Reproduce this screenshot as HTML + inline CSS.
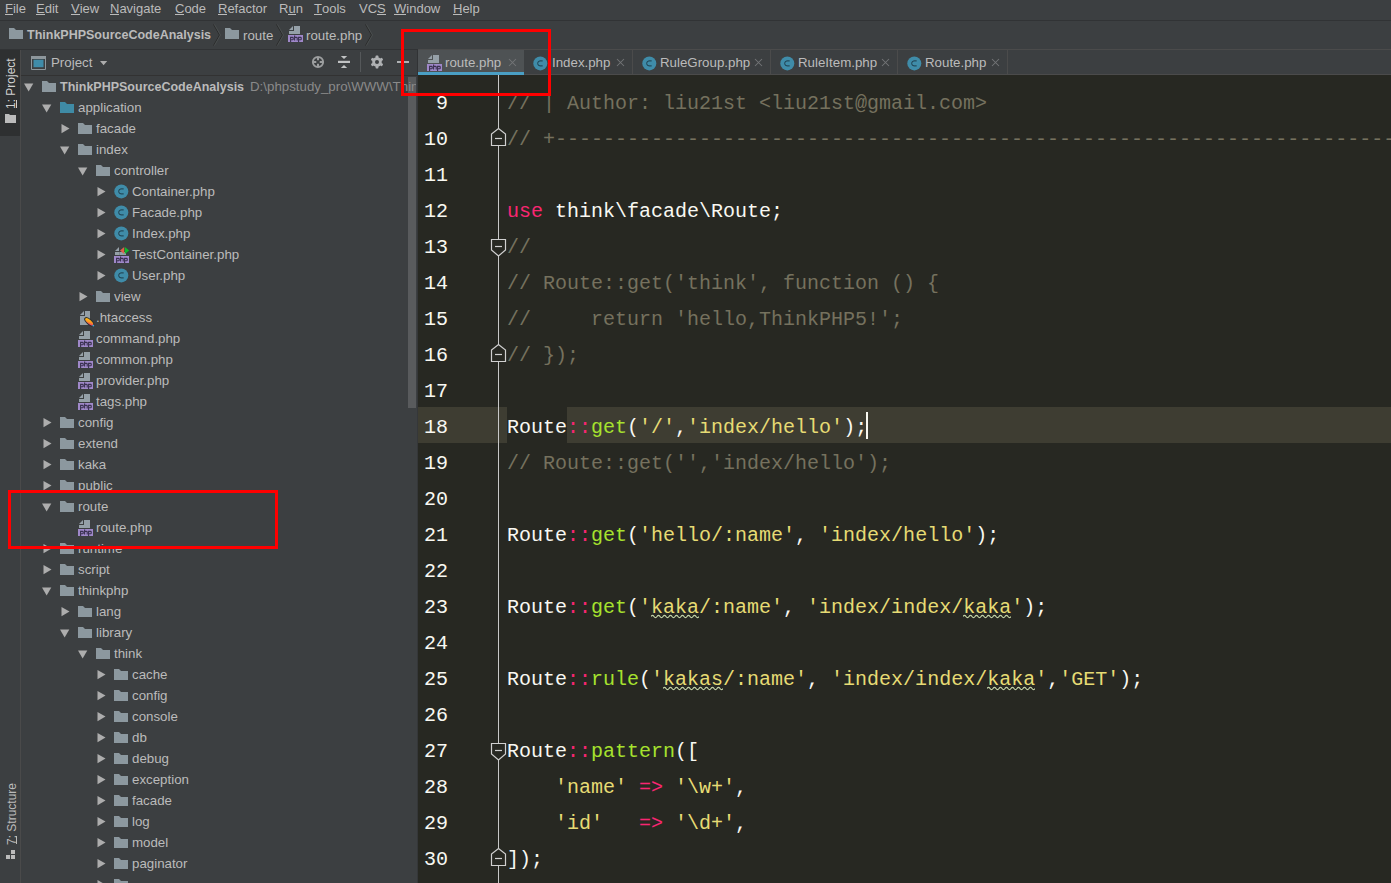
<!DOCTYPE html>
<html><head><meta charset="utf-8">
<style>
*{margin:0;padding:0;box-sizing:border-box}
html,body{width:1391px;height:883px;overflow:hidden;background:#3C3F41;font-family:"Liberation Sans",sans-serif;font-size:13px;color:#BBBBBB}
.a{position:absolute}
.t{position:absolute;white-space:pre;line-height:16px;font-size:13.3px}
#menu{left:0;top:0;width:1391px;height:21px;background:#3C3F41;border-bottom:1px solid #313335}
#menu span{position:absolute;top:1px;white-space:pre;line-height:16px}
#menu u{text-decoration:none;position:relative}
#menu u:after{content:"";position:absolute;left:0;right:0;top:13px;height:1px;background:#BBBBBB}
#crumb{left:0;top:21px;width:1391px;height:29px;background:#3C3F41;border-bottom:1px solid #313335}
#strip{left:0;top:50px;width:21px;height:833px;background:#3C3F41;border-right:1px solid #4A4A4A}
#ptab{left:0;top:50px;width:20px;height:86px;background:#2E3031}
#phead{left:21px;top:50px;width:397px;height:26px;background:#3C3F41;border-bottom:1px solid #323232}
#tree{left:21px;top:76px;width:387px;height:807px;overflow:hidden}
#sb{left:408px;top:77px;width:8px;height:331px;background:#595B5D}
#tabs{left:418px;top:49px;width:973px;height:26px;background:#3C3F41;border-bottom:1px solid #4B4B4B;border-top:1px solid #4B4B4B}
#editor{left:418px;top:75px;width:973px;height:808px;background:#272822;overflow:hidden}
.ln{position:absolute;left:0;width:30px;text-align:right;font-family:"Liberation Mono",monospace;font-size:20px;color:#F8F8F2;height:36px;line-height:36px;padding-top:3px}
.cl{position:absolute;left:89px;white-space:pre;font-family:"Liberation Mono",monospace;font-size:20px;color:#F8F8F2;height:36px;line-height:36px;padding-top:3px}
.c{color:#75715E}.k{color:#F92672}.s{color:#E6DB74}.f{color:#A6E22E}
.red{position:absolute;border:3px solid #FF0000}
.sep{position:absolute;top:0;width:1px;height:25px;background:#313335}
</style></head><body>

<div id="menu" class="a"><span style="left:5px"><u>F</u>ile</span><span style="left:36px"><u>E</u>dit</span><span style="left:71px"><u>V</u>iew</span><span style="left:110px"><u>N</u>avigate</span><span style="left:175px"><u>C</u>ode</span><span style="left:218px"><u>R</u>efactor</span><span style="left:279px">R<u>u</u>n</span><span style="left:314px"><u>T</u>ools</span><span style="left:359px">VC<u>S</u></span><span style="left:394px"><u>W</u>indow</span><span style="left:453px"><u>H</u>elp</span></div>
<div id="crumb" class="a"></div>
<svg class="a" style="left:9px;top:28px" width="15" height="12" viewBox="0 0 15 12"><path d="M0 0H5L7 2H14V11H0Z" fill="#8C989F"/></svg>
<span class="t" style="left:27px;top:27px;font-weight:bold;font-size:12.5px">ThinkPHPSourceCodeAnalysis</span>
<svg class="a" style="left:213px;top:24px" width="8" height="22" viewBox="0 0 8 22"><path d="M0.5 0.5L6.5 11L0.5 21.5" fill="none" stroke="#2B2B2B" stroke-width="1"/><path d="M1.5 0.5L7.5 11L1.5 21.5" fill="none" stroke="#4A4D4F" stroke-width="1"/></svg>
<svg class="a" style="left:225px;top:28px" width="15" height="12" viewBox="0 0 15 12"><path d="M0 0H5L7 2H14V11H0Z" fill="#8C989F"/></svg>
<span class="t" style="left:243px;top:28px">route</span>
<svg class="a" style="left:276px;top:24px" width="8" height="22" viewBox="0 0 8 22"><path d="M0.5 0.5L6.5 11L0.5 21.5" fill="none" stroke="#2B2B2B" stroke-width="1"/><path d="M1.5 0.5L7.5 11L1.5 21.5" fill="none" stroke="#4A4D4F" stroke-width="1"/></svg>
<svg class="a" style="left:288px;top:26px" width="16" height="17" viewBox="0 0 16 17"><path d="M5 0V4H1Z" fill="#95A0A8"/><path d="M6 0H12V8H1V5H6Z" fill="#95A0A8"/><rect x="0" y="9" width="15" height="7" fill="#9F88C9"/><g fill="none" stroke="#3A3150" stroke-width="1.1"><path d="M2.6 10.8V16M2.6 11.4H4.6Q5.2 11.4 5.2 12V13.2Q5.2 13.8 4.6 13.8H2.6"/><path d="M6.6 9.6V14.4M6.6 11.4H8.6Q9.2 11.4 9.2 12V14.4"/><path d="M10.6 10.8V16M10.6 11.4H12.6Q13.2 11.4 13.2 12V13.2Q13.2 13.8 12.6 13.8H10.6"/></g></svg>
<span class="t" style="left:306px;top:28px">route.php</span>
<svg class="a" style="left:365px;top:24px" width="8" height="22" viewBox="0 0 8 22"><path d="M0.5 0.5L6.5 11L0.5 21.5" fill="none" stroke="#2B2B2B" stroke-width="1"/><path d="M1.5 0.5L7.5 11L1.5 21.5" fill="none" stroke="#4A4D4F" stroke-width="1"/></svg>
<div id="strip" class="a"></div><div id="ptab" class="a"></div>
<div class="t" style="left:-14px;top:76px;transform:rotate(-90deg);width:50px;text-align:center;font-size:12px;color:#D0D0D0">1: Project</div>
<div class="a" style="left:16px;top:100px;width:1px;height:8px;background:#D0D0D0"></div>
<svg class="a" style="left:5px;top:114px" width="12" height="10" viewBox="0 0 12 10"><path d="M0 0H4L5 1H11V9H0Z" fill="#BBBBBB"/></svg>
<div class="t" style="left:-23px;top:806px;transform:rotate(-90deg);width:70px;text-align:center;font-size:12px;color:#BBBBBB">7: Structure</div>
<div class="a" style="left:16px;top:836px;width:1px;height:8px;background:#BBBBBB"></div>
<svg class="a" style="left:6px;top:850px" width="10" height="10" viewBox="0 0 10 10"><rect x="0" y="5" width="4" height="4" fill="#BBBBBB"/><rect x="5" y="5" width="4" height="4" fill="#BBBBBB"/><rect x="5" y="0" width="4" height="4" fill="#BBBBBB"/></svg>
<div id="phead" class="a"></div>
<svg class="a" style="left:31px;top:56px" width="16" height="14" viewBox="0 0 16 14"><path d="M0.5 0H14.5V13.5H0.5Z" fill="none" stroke="#8E979C" stroke-width="1"/><rect x="0" y="0" width="15" height="3" fill="#8E979C"/><rect x="2.5" y="3.7" width="10" height="7.5" fill="#3F8CA9"/></svg>
<span class="t" style="left:51px;top:55px">Project</span>
<svg class="a" style="left:100px;top:61px" width="8" height="6" viewBox="0 0 8 6"><path d="M0 0H7.2L3.6 4.3Z" fill="#ADADAD"/></svg>
<svg class="a" style="left:311px;top:55px" width="14" height="14" viewBox="0 0 14 14"><g fill="none" stroke="#9C9E9F"><circle cx="7" cy="7" r="5.1" stroke-width="2"/><path d="M7 2V5.3M7 8.7V12M2 7H5.3M8.7 7H12" stroke-width="2"/></g></svg>
<svg class="a" style="left:338px;top:55px" width="13" height="14" viewBox="0 0 13 14"><rect x="0" y="5.8" width="12" height="2.2" fill="#C0C2C3"/><path d="M2.8 1H9.2L6 4Z" fill="#C0C2C3"/><path d="M2.8 13H9.2L6 10Z" fill="#C0C2C3"/></svg>
<div class="a" style="left:360px;top:52px;width:1px;height:20px;background:#55585A"></div>
<svg class="a" style="left:370px;top:55px" width="14" height="14" viewBox="0 0 14 14"><g fill="#AFB1B3"><circle cx="7" cy="7" r="4.8"/><rect x="5.6" y="0.6" width="2.8" height="12.8" rx="0.6"/><rect x="5.6" y="0.6" width="2.8" height="12.8" rx="0.6" transform="rotate(60 7 7)"/><rect x="5.6" y="0.6" width="2.8" height="12.8" rx="0.6" transform="rotate(120 7 7)"/></g><circle cx="7" cy="7" r="2" fill="#3C3F41"/></svg>
<div class="a" style="left:397px;top:61px;width:12px;height:2px;background:#AFB1B3"></div>
<div class="a" style="left:417px;top:50px;width:1px;height:26px;background:#313335"></div>
<div id="sb" class="a"></div>
<div class="a" style="left:0;top:76px;width:416px;height:807px;overflow:hidden"><div class="a" style="left:0;top:-76px"><svg class="a" style="left:24px;top:83px" width="10" height="9" viewBox="0 0 10 9"><path d="M0 0.5H9.3L4.65 8.5Z" fill="#ADADAD"/></svg><svg class="a" style="left:42px;top:81px" width="15" height="12" viewBox="0 0 15 12"><path d="M0 0H5L7 2H14V11H0Z" fill="#8C989F"/></svg><span class="t" style="left:60px;top:79px;font-weight:bold;font-size:12.5px">ThinkPHPSourceCodeAnalysis</span><span class="t" style="left:250px;top:79px;color:#8A8A8A">D:\phpstudy_pro\WWW\Thin</span><svg class="a" style="left:42px;top:104px" width="10" height="9" viewBox="0 0 10 9"><path d="M0 0.5H9.3L4.65 8.5Z" fill="#ADADAD"/></svg><svg class="a" style="left:60px;top:102px" width="15" height="12" viewBox="0 0 15 12"><path d="M0 0H5L7 2H14V11H0Z" fill="#3F8BA6"/></svg><span class="t" style="left:78px;top:100px">application</span><svg class="a" style="left:61px;top:124px" width="9" height="10" viewBox="0 0 9 10"><path d="M0.5 0L8.5 4.6L0.5 9.2Z" fill="#ADADAD"/></svg><svg class="a" style="left:78px;top:123px" width="15" height="12" viewBox="0 0 15 12"><path d="M0 0H5L7 2H14V11H0Z" fill="#8C989F"/></svg><span class="t" style="left:96px;top:121px">facade</span><svg class="a" style="left:60px;top:146px" width="10" height="9" viewBox="0 0 10 9"><path d="M0 0.5H9.3L4.65 8.5Z" fill="#ADADAD"/></svg><svg class="a" style="left:78px;top:144px" width="15" height="12" viewBox="0 0 15 12"><path d="M0 0H5L7 2H14V11H0Z" fill="#8C989F"/></svg><span class="t" style="left:96px;top:142px">index</span><svg class="a" style="left:78px;top:167px" width="10" height="9" viewBox="0 0 10 9"><path d="M0 0.5H9.3L4.65 8.5Z" fill="#ADADAD"/></svg><svg class="a" style="left:96px;top:165px" width="15" height="12" viewBox="0 0 15 12"><path d="M0 0H5L7 2H14V11H0Z" fill="#8C989F"/></svg><span class="t" style="left:114px;top:163px">controller</span><svg class="a" style="left:97px;top:187px" width="9" height="10" viewBox="0 0 9 10"><path d="M0.5 0L8.5 4.6L0.5 9.2Z" fill="#ADADAD"/></svg><svg class="a" style="left:114px;top:184px" width="15" height="15" viewBox="0 0 15 15"><circle cx="7.3" cy="7.4" r="7" fill="#3F8CA9"/><path d="M9.7 4.9 H7.0 Q4.699999999999999 4.9 4.699999999999999 7.4 Q4.699999999999999 9.9 7.0 9.9 H9.7" fill="none" stroke="#1D3C4B" stroke-width="1.0"/></svg><span class="t" style="left:132px;top:184px">Container.php</span><svg class="a" style="left:97px;top:208px" width="9" height="10" viewBox="0 0 9 10"><path d="M0.5 0L8.5 4.6L0.5 9.2Z" fill="#ADADAD"/></svg><svg class="a" style="left:114px;top:205px" width="15" height="15" viewBox="0 0 15 15"><circle cx="7.3" cy="7.4" r="7" fill="#3F8CA9"/><path d="M9.7 4.9 H7.0 Q4.699999999999999 4.9 4.699999999999999 7.4 Q4.699999999999999 9.9 7.0 9.9 H9.7" fill="none" stroke="#1D3C4B" stroke-width="1.0"/></svg><span class="t" style="left:132px;top:205px">Facade.php</span><svg class="a" style="left:97px;top:229px" width="9" height="10" viewBox="0 0 9 10"><path d="M0.5 0L8.5 4.6L0.5 9.2Z" fill="#ADADAD"/></svg><svg class="a" style="left:114px;top:226px" width="15" height="15" viewBox="0 0 15 15"><circle cx="7.3" cy="7.4" r="7" fill="#3F8CA9"/><path d="M9.7 4.9 H7.0 Q4.699999999999999 4.9 4.699999999999999 7.4 Q4.699999999999999 9.9 7.0 9.9 H9.7" fill="none" stroke="#1D3C4B" stroke-width="1.0"/></svg><span class="t" style="left:132px;top:226px">Index.php</span><svg class="a" style="left:97px;top:250px" width="9" height="10" viewBox="0 0 9 10"><path d="M0.5 0L8.5 4.6L0.5 9.2Z" fill="#ADADAD"/></svg><svg class="a" style="left:114px;top:247px" width="16" height="17" viewBox="0 0 16 17"><path d="M5 0V4H1Z" fill="#95A0A8"/><path d="M6 0H12V8H1V5H6Z" fill="#95A0A8"/><rect x="0" y="9" width="15" height="7" fill="#9F88C9"/><g fill="none" stroke="#3A3150" stroke-width="1.1"><path d="M2.6 10.8V16M2.6 11.4H4.6Q5.2 11.4 5.2 12V13.2Q5.2 13.8 4.6 13.8H2.6"/><path d="M6.6 9.6V14.4M6.6 11.4H8.6Q9.2 11.4 9.2 12V14.4"/><path d="M10.6 10.8V16M10.6 11.4H12.6Q13.2 11.4 13.2 12V13.2Q13.2 13.8 12.6 13.8H10.6"/></g><path d="M5.5 0H12V8H5.5Z" fill="#3C3F41"/><path d="M5.5 5H12V8H5.5Z" fill="#95A0A8"/><path d="M10.2 0V7L6 3.5Z" fill="#E0604A"/><path d="M10.8 0V7L15.2 3.5Z" fill="#10B82A"/></svg><span class="t" style="left:132px;top:247px">TestContainer.php</span><svg class="a" style="left:97px;top:271px" width="9" height="10" viewBox="0 0 9 10"><path d="M0.5 0L8.5 4.6L0.5 9.2Z" fill="#ADADAD"/></svg><svg class="a" style="left:114px;top:268px" width="15" height="15" viewBox="0 0 15 15"><circle cx="7.3" cy="7.4" r="7" fill="#3F8CA9"/><path d="M9.7 4.9 H7.0 Q4.699999999999999 4.9 4.699999999999999 7.4 Q4.699999999999999 9.9 7.0 9.9 H9.7" fill="none" stroke="#1D3C4B" stroke-width="1.0"/></svg><span class="t" style="left:132px;top:268px">User.php</span><svg class="a" style="left:79px;top:292px" width="9" height="10" viewBox="0 0 9 10"><path d="M0.5 0L8.5 4.6L0.5 9.2Z" fill="#ADADAD"/></svg><svg class="a" style="left:96px;top:291px" width="15" height="12" viewBox="0 0 15 12"><path d="M0 0H5L7 2H14V11H0Z" fill="#8C989F"/></svg><span class="t" style="left:114px;top:289px">view</span><svg class="a" style="left:80px;top:311px" width="16" height="17" viewBox="0 0 16 17"><defs><linearGradient id="fg" x1="0" y1="0" x2="1" y2="1"><stop offset="0" stop-color="#FFD21A"/><stop offset="0.5" stop-color="#FF9A1A"/><stop offset="0.85" stop-color="#E0307A"/><stop offset="1" stop-color="#9A5AC8"/></linearGradient></defs><path d="M4 0V4H0Z" fill="#95A0A8"/><path d="M5 0H10V14H0V5H5Z" fill="#95A0A8"/><ellipse cx="9.2" cy="10.8" rx="5.6" ry="2.5" transform="rotate(42 9.2 10.8)" fill="url(#fg)" stroke="#2A2E31" stroke-width="1"/><circle cx="13.3" cy="14.6" r="0.9" fill="#3FA9D9"/></svg><span class="t" style="left:96px;top:310px">.htaccess</span><svg class="a" style="left:78px;top:331px" width="16" height="17" viewBox="0 0 16 17"><path d="M5 0V4H1Z" fill="#95A0A8"/><path d="M6 0H12V8H1V5H6Z" fill="#95A0A8"/><rect x="0" y="9" width="15" height="7" fill="#9F88C9"/><g fill="none" stroke="#3A3150" stroke-width="1.1"><path d="M2.6 10.8V16M2.6 11.4H4.6Q5.2 11.4 5.2 12V13.2Q5.2 13.8 4.6 13.8H2.6"/><path d="M6.6 9.6V14.4M6.6 11.4H8.6Q9.2 11.4 9.2 12V14.4"/><path d="M10.6 10.8V16M10.6 11.4H12.6Q13.2 11.4 13.2 12V13.2Q13.2 13.8 12.6 13.8H10.6"/></g></svg><span class="t" style="left:96px;top:331px">command.php</span><svg class="a" style="left:78px;top:352px" width="16" height="17" viewBox="0 0 16 17"><path d="M5 0V4H1Z" fill="#95A0A8"/><path d="M6 0H12V8H1V5H6Z" fill="#95A0A8"/><rect x="0" y="9" width="15" height="7" fill="#9F88C9"/><g fill="none" stroke="#3A3150" stroke-width="1.1"><path d="M2.6 10.8V16M2.6 11.4H4.6Q5.2 11.4 5.2 12V13.2Q5.2 13.8 4.6 13.8H2.6"/><path d="M6.6 9.6V14.4M6.6 11.4H8.6Q9.2 11.4 9.2 12V14.4"/><path d="M10.6 10.8V16M10.6 11.4H12.6Q13.2 11.4 13.2 12V13.2Q13.2 13.8 12.6 13.8H10.6"/></g></svg><span class="t" style="left:96px;top:352px">common.php</span><svg class="a" style="left:78px;top:373px" width="16" height="17" viewBox="0 0 16 17"><path d="M5 0V4H1Z" fill="#95A0A8"/><path d="M6 0H12V8H1V5H6Z" fill="#95A0A8"/><rect x="0" y="9" width="15" height="7" fill="#9F88C9"/><g fill="none" stroke="#3A3150" stroke-width="1.1"><path d="M2.6 10.8V16M2.6 11.4H4.6Q5.2 11.4 5.2 12V13.2Q5.2 13.8 4.6 13.8H2.6"/><path d="M6.6 9.6V14.4M6.6 11.4H8.6Q9.2 11.4 9.2 12V14.4"/><path d="M10.6 10.8V16M10.6 11.4H12.6Q13.2 11.4 13.2 12V13.2Q13.2 13.8 12.6 13.8H10.6"/></g></svg><span class="t" style="left:96px;top:373px">provider.php</span><svg class="a" style="left:78px;top:394px" width="16" height="17" viewBox="0 0 16 17"><path d="M5 0V4H1Z" fill="#95A0A8"/><path d="M6 0H12V8H1V5H6Z" fill="#95A0A8"/><rect x="0" y="9" width="15" height="7" fill="#9F88C9"/><g fill="none" stroke="#3A3150" stroke-width="1.1"><path d="M2.6 10.8V16M2.6 11.4H4.6Q5.2 11.4 5.2 12V13.2Q5.2 13.8 4.6 13.8H2.6"/><path d="M6.6 9.6V14.4M6.6 11.4H8.6Q9.2 11.4 9.2 12V14.4"/><path d="M10.6 10.8V16M10.6 11.4H12.6Q13.2 11.4 13.2 12V13.2Q13.2 13.8 12.6 13.8H10.6"/></g></svg><span class="t" style="left:96px;top:394px">tags.php</span><svg class="a" style="left:43px;top:418px" width="9" height="10" viewBox="0 0 9 10"><path d="M0.5 0L8.5 4.6L0.5 9.2Z" fill="#ADADAD"/></svg><svg class="a" style="left:60px;top:417px" width="15" height="12" viewBox="0 0 15 12"><path d="M0 0H5L7 2H14V11H0Z" fill="#8C989F"/></svg><span class="t" style="left:78px;top:415px">config</span><svg class="a" style="left:43px;top:439px" width="9" height="10" viewBox="0 0 9 10"><path d="M0.5 0L8.5 4.6L0.5 9.2Z" fill="#ADADAD"/></svg><svg class="a" style="left:60px;top:438px" width="15" height="12" viewBox="0 0 15 12"><path d="M0 0H5L7 2H14V11H0Z" fill="#8C989F"/></svg><span class="t" style="left:78px;top:436px">extend</span><svg class="a" style="left:43px;top:460px" width="9" height="10" viewBox="0 0 9 10"><path d="M0.5 0L8.5 4.6L0.5 9.2Z" fill="#ADADAD"/></svg><svg class="a" style="left:60px;top:459px" width="15" height="12" viewBox="0 0 15 12"><path d="M0 0H5L7 2H14V11H0Z" fill="#8C989F"/></svg><span class="t" style="left:78px;top:457px">kaka</span><svg class="a" style="left:43px;top:481px" width="9" height="10" viewBox="0 0 9 10"><path d="M0.5 0L8.5 4.6L0.5 9.2Z" fill="#ADADAD"/></svg><svg class="a" style="left:60px;top:480px" width="15" height="12" viewBox="0 0 15 12"><path d="M0 0H5L7 2H14V11H0Z" fill="#8C989F"/></svg><span class="t" style="left:78px;top:478px">public</span><svg class="a" style="left:42px;top:503px" width="10" height="9" viewBox="0 0 10 9"><path d="M0 0.5H9.3L4.65 8.5Z" fill="#ADADAD"/></svg><svg class="a" style="left:60px;top:501px" width="15" height="12" viewBox="0 0 15 12"><path d="M0 0H5L7 2H14V11H0Z" fill="#8C989F"/></svg><span class="t" style="left:78px;top:499px">route</span><svg class="a" style="left:78px;top:520px" width="16" height="17" viewBox="0 0 16 17"><path d="M5 0V4H1Z" fill="#95A0A8"/><path d="M6 0H12V8H1V5H6Z" fill="#95A0A8"/><rect x="0" y="9" width="15" height="7" fill="#9F88C9"/><g fill="none" stroke="#3A3150" stroke-width="1.1"><path d="M2.6 10.8V16M2.6 11.4H4.6Q5.2 11.4 5.2 12V13.2Q5.2 13.8 4.6 13.8H2.6"/><path d="M6.6 9.6V14.4M6.6 11.4H8.6Q9.2 11.4 9.2 12V14.4"/><path d="M10.6 10.8V16M10.6 11.4H12.6Q13.2 11.4 13.2 12V13.2Q13.2 13.8 12.6 13.8H10.6"/></g></svg><span class="t" style="left:96px;top:520px">route.php</span><svg class="a" style="left:43px;top:544px" width="9" height="10" viewBox="0 0 9 10"><path d="M0.5 0L8.5 4.6L0.5 9.2Z" fill="#ADADAD"/></svg><svg class="a" style="left:60px;top:543px" width="15" height="12" viewBox="0 0 15 12"><path d="M0 0H5L7 2H14V11H0Z" fill="#8C989F"/></svg><span class="t" style="left:78px;top:541px">runtime</span><svg class="a" style="left:43px;top:565px" width="9" height="10" viewBox="0 0 9 10"><path d="M0.5 0L8.5 4.6L0.5 9.2Z" fill="#ADADAD"/></svg><svg class="a" style="left:60px;top:564px" width="15" height="12" viewBox="0 0 15 12"><path d="M0 0H5L7 2H14V11H0Z" fill="#8C989F"/></svg><span class="t" style="left:78px;top:562px">script</span><svg class="a" style="left:42px;top:587px" width="10" height="9" viewBox="0 0 10 9"><path d="M0 0.5H9.3L4.65 8.5Z" fill="#ADADAD"/></svg><svg class="a" style="left:60px;top:585px" width="15" height="12" viewBox="0 0 15 12"><path d="M0 0H5L7 2H14V11H0Z" fill="#8C989F"/></svg><span class="t" style="left:78px;top:583px">thinkphp</span><svg class="a" style="left:61px;top:607px" width="9" height="10" viewBox="0 0 9 10"><path d="M0.5 0L8.5 4.6L0.5 9.2Z" fill="#ADADAD"/></svg><svg class="a" style="left:78px;top:606px" width="15" height="12" viewBox="0 0 15 12"><path d="M0 0H5L7 2H14V11H0Z" fill="#8C989F"/></svg><span class="t" style="left:96px;top:604px">lang</span><svg class="a" style="left:60px;top:629px" width="10" height="9" viewBox="0 0 10 9"><path d="M0 0.5H9.3L4.65 8.5Z" fill="#ADADAD"/></svg><svg class="a" style="left:78px;top:627px" width="15" height="12" viewBox="0 0 15 12"><path d="M0 0H5L7 2H14V11H0Z" fill="#8C989F"/></svg><span class="t" style="left:96px;top:625px">library</span><svg class="a" style="left:78px;top:650px" width="10" height="9" viewBox="0 0 10 9"><path d="M0 0.5H9.3L4.65 8.5Z" fill="#ADADAD"/></svg><svg class="a" style="left:96px;top:648px" width="15" height="12" viewBox="0 0 15 12"><path d="M0 0H5L7 2H14V11H0Z" fill="#8C989F"/></svg><span class="t" style="left:114px;top:646px">think</span><svg class="a" style="left:97px;top:670px" width="9" height="10" viewBox="0 0 9 10"><path d="M0.5 0L8.5 4.6L0.5 9.2Z" fill="#ADADAD"/></svg><svg class="a" style="left:114px;top:669px" width="15" height="12" viewBox="0 0 15 12"><path d="M0 0H5L7 2H14V11H0Z" fill="#8C989F"/></svg><span class="t" style="left:132px;top:667px">cache</span><svg class="a" style="left:97px;top:691px" width="9" height="10" viewBox="0 0 9 10"><path d="M0.5 0L8.5 4.6L0.5 9.2Z" fill="#ADADAD"/></svg><svg class="a" style="left:114px;top:690px" width="15" height="12" viewBox="0 0 15 12"><path d="M0 0H5L7 2H14V11H0Z" fill="#8C989F"/></svg><span class="t" style="left:132px;top:688px">config</span><svg class="a" style="left:97px;top:712px" width="9" height="10" viewBox="0 0 9 10"><path d="M0.5 0L8.5 4.6L0.5 9.2Z" fill="#ADADAD"/></svg><svg class="a" style="left:114px;top:711px" width="15" height="12" viewBox="0 0 15 12"><path d="M0 0H5L7 2H14V11H0Z" fill="#8C989F"/></svg><span class="t" style="left:132px;top:709px">console</span><svg class="a" style="left:97px;top:733px" width="9" height="10" viewBox="0 0 9 10"><path d="M0.5 0L8.5 4.6L0.5 9.2Z" fill="#ADADAD"/></svg><svg class="a" style="left:114px;top:732px" width="15" height="12" viewBox="0 0 15 12"><path d="M0 0H5L7 2H14V11H0Z" fill="#8C989F"/></svg><span class="t" style="left:132px;top:730px">db</span><svg class="a" style="left:97px;top:754px" width="9" height="10" viewBox="0 0 9 10"><path d="M0.5 0L8.5 4.6L0.5 9.2Z" fill="#ADADAD"/></svg><svg class="a" style="left:114px;top:753px" width="15" height="12" viewBox="0 0 15 12"><path d="M0 0H5L7 2H14V11H0Z" fill="#8C989F"/></svg><span class="t" style="left:132px;top:751px">debug</span><svg class="a" style="left:97px;top:775px" width="9" height="10" viewBox="0 0 9 10"><path d="M0.5 0L8.5 4.6L0.5 9.2Z" fill="#ADADAD"/></svg><svg class="a" style="left:114px;top:774px" width="15" height="12" viewBox="0 0 15 12"><path d="M0 0H5L7 2H14V11H0Z" fill="#8C989F"/></svg><span class="t" style="left:132px;top:772px">exception</span><svg class="a" style="left:97px;top:796px" width="9" height="10" viewBox="0 0 9 10"><path d="M0.5 0L8.5 4.6L0.5 9.2Z" fill="#ADADAD"/></svg><svg class="a" style="left:114px;top:795px" width="15" height="12" viewBox="0 0 15 12"><path d="M0 0H5L7 2H14V11H0Z" fill="#8C989F"/></svg><span class="t" style="left:132px;top:793px">facade</span><svg class="a" style="left:97px;top:817px" width="9" height="10" viewBox="0 0 9 10"><path d="M0.5 0L8.5 4.6L0.5 9.2Z" fill="#ADADAD"/></svg><svg class="a" style="left:114px;top:816px" width="15" height="12" viewBox="0 0 15 12"><path d="M0 0H5L7 2H14V11H0Z" fill="#8C989F"/></svg><span class="t" style="left:132px;top:814px">log</span><svg class="a" style="left:97px;top:838px" width="9" height="10" viewBox="0 0 9 10"><path d="M0.5 0L8.5 4.6L0.5 9.2Z" fill="#ADADAD"/></svg><svg class="a" style="left:114px;top:837px" width="15" height="12" viewBox="0 0 15 12"><path d="M0 0H5L7 2H14V11H0Z" fill="#8C989F"/></svg><span class="t" style="left:132px;top:835px">model</span><svg class="a" style="left:97px;top:859px" width="9" height="10" viewBox="0 0 9 10"><path d="M0.5 0L8.5 4.6L0.5 9.2Z" fill="#ADADAD"/></svg><svg class="a" style="left:114px;top:858px" width="15" height="12" viewBox="0 0 15 12"><path d="M0 0H5L7 2H14V11H0Z" fill="#8C989F"/></svg><span class="t" style="left:132px;top:856px">paginator</span><svg class="a" style="left:97px;top:880px" width="9" height="10" viewBox="0 0 9 10"><path d="M0.5 0L8.5 4.6L0.5 9.2Z" fill="#ADADAD"/></svg><svg class="a" style="left:114px;top:879px" width="15" height="12" viewBox="0 0 15 12"><path d="M0 0H5L7 2H14V11H0Z" fill="#8C989F"/></svg></div></div>
<div class="a" style="left:417px;top:76px;width:1px;height:807px;background:#353739"></div>
<div id="tabs" class="a"></div>
<div class="a" style="left:418px;top:50px;width:106px;height:22px;background:#4E5254"></div>
<div class="a" style="left:418px;top:72px;width:106px;height:3px;background:#4A9FC4"></div>
<svg class="a" style="left:427px;top:55px" width="16" height="17" viewBox="0 0 16 17"><path d="M5 0V4H1Z" fill="#95A0A8"/><path d="M6 0H12V8H1V5H6Z" fill="#95A0A8"/><rect x="0" y="9" width="15" height="7" fill="#9F88C9"/><g fill="none" stroke="#3A3150" stroke-width="1.1"><path d="M2.6 10.8V16M2.6 11.4H4.6Q5.2 11.4 5.2 12V13.2Q5.2 13.8 4.6 13.8H2.6"/><path d="M6.6 9.6V14.4M6.6 11.4H8.6Q9.2 11.4 9.2 12V14.4"/><path d="M10.6 10.8V16M10.6 11.4H12.6Q13.2 11.4 13.2 12V13.2Q13.2 13.8 12.6 13.8H10.6"/></g></svg>
<span class="t" style="left:445px;top:55px">route.php</span>
<svg class="a" style="left:508px;top:58px" width="9" height="9" viewBox="0 0 9 9"><path d="M1 1L8 8M8 1L1 8" stroke="#737577" stroke-width="1.05"/></svg>
<svg class="a" style="left:533px;top:56px" width="15" height="15" viewBox="0 0 15 15"><circle cx="7.3" cy="7.4" r="7" fill="#3F8CA9"/><path d="M9.7 4.9 H7.0 Q4.699999999999999 4.9 4.699999999999999 7.4 Q4.699999999999999 9.9 7.0 9.9 H9.7" fill="none" stroke="#1D3C4B" stroke-width="1.0"/></svg>
<span class="t" style="left:552px;top:55px">Index.php</span>
<svg class="a" style="left:616px;top:58px" width="9" height="9" viewBox="0 0 9 9"><path d="M1 1L8 8M8 1L1 8" stroke="#737577" stroke-width="1.05"/></svg>
<div class="a" style="left:632px;top:50px;width:1px;height:24px;background:#4B4B4B"></div>
<svg class="a" style="left:642px;top:56px" width="15" height="15" viewBox="0 0 15 15"><circle cx="7.3" cy="7.4" r="7" fill="#3F8CA9"/><path d="M9.7 4.9 H7.0 Q4.699999999999999 4.9 4.699999999999999 7.4 Q4.699999999999999 9.9 7.0 9.9 H9.7" fill="none" stroke="#1D3C4B" stroke-width="1.0"/></svg>
<span class="t" style="left:660px;top:55px">RuleGroup.php</span>
<svg class="a" style="left:754px;top:58px" width="9" height="9" viewBox="0 0 9 9"><path d="M1 1L8 8M8 1L1 8" stroke="#737577" stroke-width="1.05"/></svg>
<div class="a" style="left:770px;top:50px;width:1px;height:24px;background:#4B4B4B"></div>
<svg class="a" style="left:780px;top:56px" width="15" height="15" viewBox="0 0 15 15"><circle cx="7.3" cy="7.4" r="7" fill="#3F8CA9"/><path d="M9.7 4.9 H7.0 Q4.699999999999999 4.9 4.699999999999999 7.4 Q4.699999999999999 9.9 7.0 9.9 H9.7" fill="none" stroke="#1D3C4B" stroke-width="1.0"/></svg>
<span class="t" style="left:798px;top:55px">RuleItem.php</span>
<svg class="a" style="left:881px;top:58px" width="9" height="9" viewBox="0 0 9 9"><path d="M1 1L8 8M8 1L1 8" stroke="#737577" stroke-width="1.05"/></svg>
<div class="a" style="left:897px;top:50px;width:1px;height:24px;background:#4B4B4B"></div>
<svg class="a" style="left:907px;top:56px" width="15" height="15" viewBox="0 0 15 15"><circle cx="7.3" cy="7.4" r="7" fill="#3F8CA9"/><path d="M9.7 4.9 H7.0 Q4.699999999999999 4.9 4.699999999999999 7.4 Q4.699999999999999 9.9 7.0 9.9 H9.7" fill="none" stroke="#1D3C4B" stroke-width="1.0"/></svg>
<span class="t" style="left:925px;top:55px">Route.php</span>
<svg class="a" style="left:991px;top:58px" width="9" height="9" viewBox="0 0 9 9"><path d="M1 1L8 8M8 1L1 8" stroke="#737577" stroke-width="1.05"/></svg>
<div class="a" style="left:1007px;top:50px;width:1px;height:24px;background:#4B4B4B"></div>
<div id="editor" class="a">
<div class="a" style="left:0;top:332px;width:89px;height:36px;background:#3E3D32"></div>
<div class="a" style="left:149px;top:332px;width:824px;height:36px;background:#3E3D32"></div>
<div class="a" style="left:80px;top:0;width:1px;height:808px;background:#C8C8C8"></div>
<div class="ln" style="top:8px">9</div>
<div class="cl" style="top:8px"><span class="c">// | Author: liu21st &lt;liu21st@gmail.com&gt;</span></div>
<div class="ln" style="top:44px">10</div>
<div class="cl" style="top:44px"><span class="c">// +--------------------------------------------------------------------------------</span></div>
<div class="ln" style="top:80px">11</div>
<div class="cl" style="top:80px"></div>
<div class="ln" style="top:116px">12</div>
<div class="cl" style="top:116px"><span class="k">use</span> think\facade\Route;</div>
<div class="ln" style="top:152px">13</div>
<div class="cl" style="top:152px"><span class="c">//</span></div>
<div class="ln" style="top:188px">14</div>
<div class="cl" style="top:188px"><span class="c">// Route::get('think', function () {</span></div>
<div class="ln" style="top:224px">15</div>
<div class="cl" style="top:224px"><span class="c">//     return 'hello,ThinkPHP5!';</span></div>
<div class="ln" style="top:260px">16</div>
<div class="cl" style="top:260px"><span class="c">// });</span></div>
<div class="ln" style="top:296px">17</div>
<div class="cl" style="top:296px"></div>
<div class="ln" style="top:332px">18</div>
<div class="cl" style="top:332px">Route<span class="k">::</span><span class="f">get</span>(<span class="s">'/'</span>,<span class="s">'index/hello'</span>);</div>
<div class="ln" style="top:368px">19</div>
<div class="cl" style="top:368px"><span class="c">// Route::get('','index/hello');</span></div>
<div class="ln" style="top:404px">20</div>
<div class="cl" style="top:404px"></div>
<div class="ln" style="top:440px">21</div>
<div class="cl" style="top:440px">Route<span class="k">::</span><span class="f">get</span>(<span class="s">'hello/:name'</span>, <span class="s">'index/hello'</span>);</div>
<div class="ln" style="top:476px">22</div>
<div class="cl" style="top:476px"></div>
<div class="ln" style="top:512px">23</div>
<div class="cl" style="top:512px">Route<span class="k">::</span><span class="f">get</span>(<span class="s">'kaka/:name'</span>, <span class="s">'index/index/kaka'</span>);</div>
<div class="ln" style="top:548px">24</div>
<div class="cl" style="top:548px"></div>
<div class="ln" style="top:584px">25</div>
<div class="cl" style="top:584px">Route<span class="k">::</span><span class="f">rule</span>(<span class="s">'kakas/:name'</span>, <span class="s">'index/index/kaka'</span>,<span class="s">'GET'</span>);</div>
<div class="ln" style="top:620px">26</div>
<div class="cl" style="top:620px"></div>
<div class="ln" style="top:656px">27</div>
<div class="cl" style="top:656px">Route<span class="k">::</span><span class="f">pattern</span>([</div>
<div class="ln" style="top:692px">28</div>
<div class="cl" style="top:692px">    <span class="s">'name'</span> <span class="k">=&gt;</span> <span class="s">'\w+'</span>,</div>
<div class="ln" style="top:728px">29</div>
<div class="cl" style="top:728px">    <span class="s">'id'</span>   <span class="k">=&gt;</span> <span class="s">'\d+'</span>,</div>
<div class="ln" style="top:764px">30</div>
<div class="cl" style="top:764px">]);</div>
<svg class="a" style="left:70px;top:44px" width="20" height="36" viewBox="0 0 20 36"><path d="M3.5 26.5 V15.0 L10.5 9.5 L17.5 15.0 V26.5 Z" fill="#272822" stroke="#D0D0D0" stroke-width="1.2"/><path d="M7 19.5 H14" stroke="#D0D0D0" stroke-width="1.2"/></svg>
<svg class="a" style="left:70px;top:260px" width="20" height="36" viewBox="0 0 20 36"><path d="M3.5 26.5 V15.0 L10.5 9.5 L17.5 15.0 V26.5 Z" fill="#272822" stroke="#D0D0D0" stroke-width="1.2"/><path d="M7 19.5 H14" stroke="#D0D0D0" stroke-width="1.2"/></svg>
<svg class="a" style="left:70px;top:764px" width="20" height="36" viewBox="0 0 20 36"><path d="M3.5 26.5 V15.0 L10.5 9.5 L17.5 15.0 V26.5 Z" fill="#272822" stroke="#D0D0D0" stroke-width="1.2"/><path d="M7 19.5 H14" stroke="#D0D0D0" stroke-width="1.2"/></svg>
<svg class="a" style="left:70px;top:152px" width="20" height="36" viewBox="0 0 20 36"><path d="M3.5 12.5 V23.0 L10.5 29.0 L17.5 23.0 V12.5 Z" fill="#272822" stroke="#D0D0D0" stroke-width="1.2"/><path d="M7 19.5 H14" stroke="#D0D0D0" stroke-width="1.2"/></svg>
<svg class="a" style="left:70px;top:656px" width="20" height="36" viewBox="0 0 20 36"><path d="M3.5 12.5 V23.0 L10.5 29.0 L17.5 23.0 V12.5 Z" fill="#272822" stroke="#D0D0D0" stroke-width="1.2"/><path d="M7 19.5 H14" stroke="#D0D0D0" stroke-width="1.2"/></svg>
<div class="a" style="left:448px;top:337px;width:2px;height:27px;background:#F8F8F0"></div>
<svg class="a" style="left:233px;top:539px" width="48" height="5" viewBox="0 0 48 5"><path d="M0 2.5 Q1.5 0.3 3 2.5 Q4.5 4.7 6 2.5 Q7.5 0.3 9 2.5 Q10.5 4.7 12 2.5 Q13.5 0.3 15 2.5 Q16.5 4.7 18 2.5 Q19.5 0.3 21 2.5 Q22.5 4.7 24 2.5 Q25.5 0.3 27 2.5 Q28.5 4.7 30 2.5 Q31.5 0.3 33 2.5 Q34.5 4.7 36 2.5 Q37.5 0.3 39 2.5 Q40.5 4.7 42 2.5 Q43.5 0.3 45 2.5 Q46.5 4.7 48 2.5" fill="none" stroke="#C2D2A6" stroke-width="1.2"/></svg>
<svg class="a" style="left:545px;top:539px" width="48" height="5" viewBox="0 0 48 5"><path d="M0 2.5 Q1.5 0.3 3 2.5 Q4.5 4.7 6 2.5 Q7.5 0.3 9 2.5 Q10.5 4.7 12 2.5 Q13.5 0.3 15 2.5 Q16.5 4.7 18 2.5 Q19.5 0.3 21 2.5 Q22.5 4.7 24 2.5 Q25.5 0.3 27 2.5 Q28.5 4.7 30 2.5 Q31.5 0.3 33 2.5 Q34.5 4.7 36 2.5 Q37.5 0.3 39 2.5 Q40.5 4.7 42 2.5 Q43.5 0.3 45 2.5 Q46.5 4.7 48 2.5" fill="none" stroke="#C2D2A6" stroke-width="1.2"/></svg>
<svg class="a" style="left:245px;top:611px" width="60" height="5" viewBox="0 0 60 5"><path d="M0 2.5 Q1.5 0.3 3 2.5 Q4.5 4.7 6 2.5 Q7.5 0.3 9 2.5 Q10.5 4.7 12 2.5 Q13.5 0.3 15 2.5 Q16.5 4.7 18 2.5 Q19.5 0.3 21 2.5 Q22.5 4.7 24 2.5 Q25.5 0.3 27 2.5 Q28.5 4.7 30 2.5 Q31.5 0.3 33 2.5 Q34.5 4.7 36 2.5 Q37.5 0.3 39 2.5 Q40.5 4.7 42 2.5 Q43.5 0.3 45 2.5 Q46.5 4.7 48 2.5 Q49.5 0.3 51 2.5 Q52.5 4.7 54 2.5 Q55.5 0.3 57 2.5 Q58.5 4.7 60 2.5" fill="none" stroke="#C2D2A6" stroke-width="1.2"/></svg>
<svg class="a" style="left:569px;top:611px" width="48" height="5" viewBox="0 0 48 5"><path d="M0 2.5 Q1.5 0.3 3 2.5 Q4.5 4.7 6 2.5 Q7.5 0.3 9 2.5 Q10.5 4.7 12 2.5 Q13.5 0.3 15 2.5 Q16.5 4.7 18 2.5 Q19.5 0.3 21 2.5 Q22.5 4.7 24 2.5 Q25.5 0.3 27 2.5 Q28.5 4.7 30 2.5 Q31.5 0.3 33 2.5 Q34.5 4.7 36 2.5 Q37.5 0.3 39 2.5 Q40.5 4.7 42 2.5 Q43.5 0.3 45 2.5 Q46.5 4.7 48 2.5" fill="none" stroke="#C2D2A6" stroke-width="1.2"/></svg>
</div>
<div class="red" style="left:401px;top:29px;width:150px;height:67px"></div>
<div class="red" style="left:8px;top:490px;width:270px;height:59px"></div>
</body></html>
